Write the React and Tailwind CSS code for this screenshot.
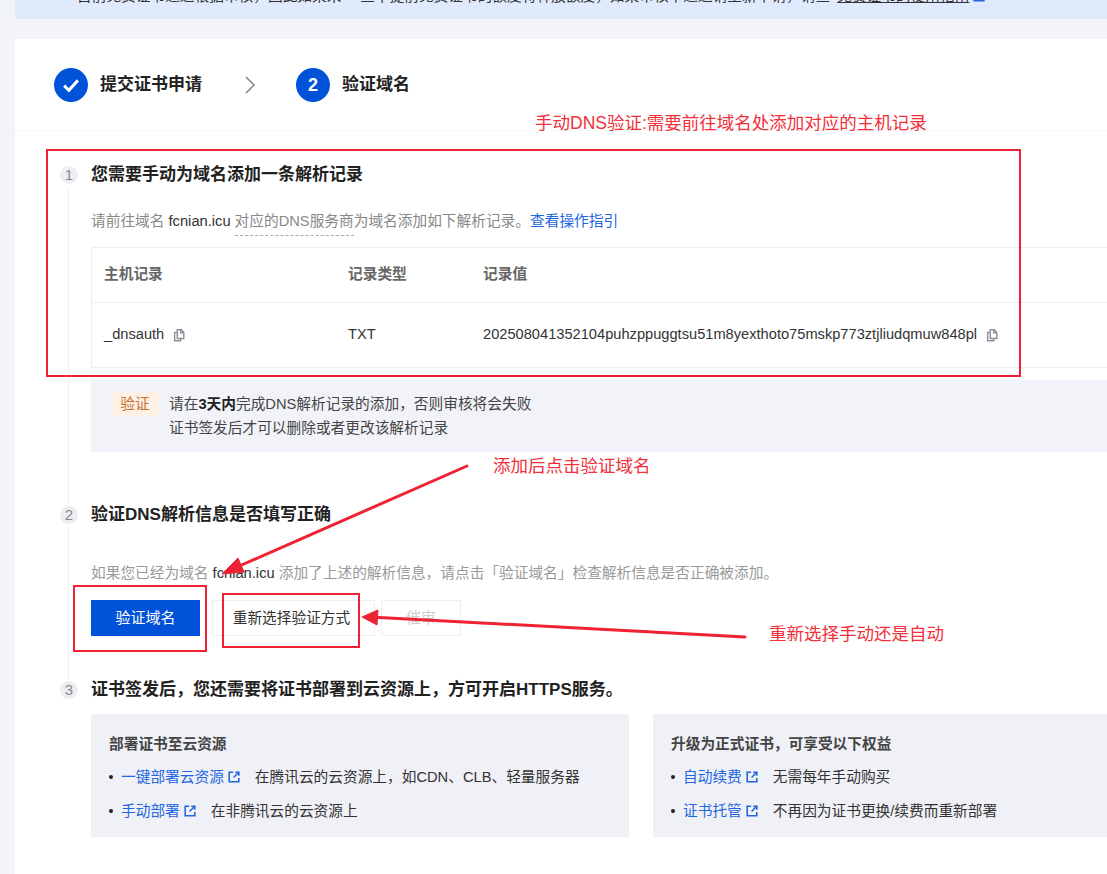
const font = { fontFamily: '"Liberation Sans", "Noto Sans CJK SC", sans-serif' };

function CopyIcon() {
  return (
    <svg viewBox="0 0 16 16" className="w-[14px] h-[14px] shrink-0 text-[#8a8f99]" fill="none" stroke="currentColor" strokeWidth="1.6">
      <path d="M6 2h4.5L13.5 5v7H6z" />
      <path d="M10 2v3.5h3.5" />
      <path d="M6 5H3v9.5h7V12" />
    </svg>
  );
}

function LinkIcon() {
  return (
    <svg viewBox="0 0 16 16" className="w-[14px] h-[14px] shrink-0 text-[#1f66e0] ml-[3px]" fill="none" stroke="currentColor" strokeWidth="1.8">
      <path d="M7 2.5H2.5v11h11V9" />
      <path d="M9.5 2.5h4v4" />
      <path d="M13.5 2.5L7.5 8.5" />
    </svg>
  );
}

function StepNum({ n }) {
  return (
    <div className="w-[18px] h-[18px] rounded-full bg-[#eceef2] text-[#888] text-[15px] flex items-center justify-center shrink-0">
      {n}
    </div>
  );
}

function Bullet({ label, desc }) {
  return (
    <div className="flex items-center text-[14.7px] text-[#333] h-[20px]">
      <span className="w-[4px] h-[4px] rounded-full bg-[#222] mr-[8px]" />
      <span className="text-[#1f66e0]">{label}</span>
      <LinkIcon />
      <span className="ml-[14px]">{desc}</span>
    </div>
  );
}

export default function App() {
  return (
    <div style={font} className="relative w-[1107px] h-[874px] overflow-hidden bg-[#f3f4f8] pl-[15px]">
      <div className="h-[19px] bg-[#e0eafd] overflow-hidden pl-[62px] text-[14.7px] text-[#333] leading-[20px] whitespace-nowrap">
        <div className="-mt-[14px] flex items-center">
          <span>目前免费证书通过根据审核，因此如果未  一旦中提前免费证书的额度将释放额度，如果审核不通过请重新申请，请查</span>
          <span className="underline ml-[7px]">免费证书的使用指南</span>
          <LinkIcon />
        </div>
      </div>

      <div className="mt-[20px] h-[835px] bg-white">
        <div className="h-[92px] border-b border-[#f7f7f8] flex items-start pt-[29px] pl-[39px]">
          <div className="w-[34px] h-[34px] rounded-full bg-[#0052d9] flex items-center justify-center">
            <svg viewBox="0 0 16 16" className="w-[20px] h-[20px]" fill="none" stroke="white" strokeWidth="2.4">
              <path d="M2.5 8.5l3.8 3.8 7.2-8" />
            </svg>
          </div>
          <span className="ml-[12px] text-[17px] leading-[34px] font-bold text-[#222]">提交证书申请</span>
          <svg viewBox="0 0 12 20" className="w-[12px] h-[20px] ml-[42px] mt-[7px] text-[#888]" fill="none" stroke="currentColor" strokeWidth="1.6">
            <path d="M2 2l8 8-8 8" />
          </svg>
          <div className="ml-[40px] w-[34px] h-[34px] rounded-full bg-[#0052d9] text-white font-bold text-[18px] flex items-center justify-center">2</div>
          <span className="ml-[12px] text-[17px] leading-[34px] font-bold text-[#222]">验证域名</span>
        </div>

        <div className="pl-[45px] pt-[34px]">
          <div className="flex items-center gap-[13px] h-[20px]">
            <StepNum n="1" />
            <h2 className="text-[17px] font-bold text-[#222]">您需要手动为域名添加一条解析记录</h2>
          </div>

          <div className="ml-[8px] border-l border-[#f0f0f2] pl-[22px] pb-[53px] mt-[2px]">
            <div className="pt-[20px] h-[60px] text-[14.7px] text-[#888] leading-[28px] flex items-start">
              <span>请前往域名 <span className="text-[#333]">fcnian.icu</span></span>
              <span className="ml-[4px] border-b border-dashed border-[#aaa] h-[29px]">对应的DNS服务商</span>
              <span>为域名添加如下解析记录。</span>
              <span className="text-[#1f66e0]">查看操作指引</span>
            </div>
            <div className="border border-[#eeeff1] w-[1040px]">
              <div className="flex h-[55px] pb-[2px] items-center border-b border-[#eeeff1] text-[14.7px] font-bold text-[#666]">
                <span className="w-[256px] pl-[12px]">主机记录</span>
                <span className="w-[135px]">记录类型</span>
                <span>记录值</span>
              </div>
              <div className="flex h-[64px] items-center text-[14.65px] text-[#333]">
                <div className="w-[256px] pl-[12px] flex items-center gap-[8px]">_dnsauth <CopyIcon /></div>
                <span className="w-[135px]">TXT</span>
                <div className="flex items-center gap-[8px]">202508041352104puhzppuggtsu51m8yexthoto75mskp773ztjliudqmuw848pl <CopyIcon /></div>
              </div>
            </div>
            <div className="mt-[12px] h-[72px] w-[1040px] bg-[#f2f3f8] flex items-start pl-[20px] pt-[12px]">
              <span className="w-[48px] h-[24px] bg-[#fdf0e5] text-[#c9722e] text-[14.7px] flex items-center justify-center shrink-0">验证</span>
              <div className="ml-[10px] text-[14.7px] text-[#444] leading-[24px]">
                <div>请在<b className="text-[#222]">3天内</b>完成DNS解析记录的添加，否则审核将会失败</div>
                <div>证书签发后才可以删除或者更改该解析记录</div>
              </div>
            </div>
          </div>

          <div className="flex items-center gap-[13px] h-[20px]">
            <StepNum n="2" />
            <h2 className="text-[17px] font-bold text-[#222]">验证DNS解析信息是否填写正确</h2>
          </div>

          <div className="ml-[8px] border-l border-[#f0f0f2] pl-[22px] pb-[44px] mt-[2px]">
            <div className="pt-[32px] text-[14.7px] text-[#999] leading-[28px]">
              如果您已经为域名 <span className="text-[#333]">fcnian.icu</span> 添加了上述的解析信息，请点击「验证域名」检查解析信息是否正确被添加。
            </div>
            <div className="flex mt-[13px]">
              <div className="w-[109px] h-[36px] bg-[#0052d9] text-white text-[15px] flex items-center justify-center">验证域名</div>
              <div className="ml-[12px] w-[163px] h-[36px] border border-[#eeeff1] text-[14.7px] text-[#333] flex items-center justify-center">
                <span className="-ml-[4px]">重新选择验证方式</span>
              </div>
              <div className="ml-[6px] w-[80px] h-[36px] border border-[#eeeff1] text-[14.7px] text-[#ccc] flex items-center justify-center">催审</div>
            </div>
          </div>

          <div className="flex items-center gap-[13px] h-[20px]">
            <StepNum n="3" />
            <h2 className="text-[17px] font-bold text-[#222]">证书签发后，您还需要将证书部署到云资源上，方可开启HTTPS服务。</h2>
          </div>

          <div className="ml-[31px] mt-[14px] flex gap-[24px] w-[1040px]">
            <div className="w-[538px] h-[123px] bg-[#f0f1f6] pl-[18px] pt-[20px] shrink-0">
              <div className="text-[14.7px] font-bold text-[#444] leading-[20px]">部署证书至云资源</div>
              <div className="mt-[13px] flex flex-col gap-[14px]">
                <Bullet label="一键部署云资源" desc="在腾讯云的云资源上，如CDN、CLB、轻量服务器" />
                <Bullet label="手动部署" desc="在非腾讯云的云资源上" />
              </div>
            </div>
            <div className="flex-1 h-[123px] bg-[#f0f1f6] pl-[18px] pt-[20px]">
              <div className="text-[14.7px] font-bold text-[#444] leading-[20px]">升级为正式证书，可享受以下权益</div>
              <div className="mt-[13px] flex flex-col gap-[14px]">
                <Bullet label="自动续费" desc="无需每年手动购买" />
                <Bullet label="证书托管" desc="不再因为证书更换/续费而重新部署" />
              </div>
            </div>
          </div>
        </div>
      </div>

      {/* annotations drawn over the screenshot */}
      <div className="absolute left-[46px] top-[149px] w-[975px] h-[228px] border-2 border-[#ee2233]" />
      <div className="absolute left-[73px] top-[585px] w-[134px] h-[67px] border-2 border-[#ee2233]" />
      <div className="absolute left-[222px] top-[593px] w-[138px] h-[55px] border-2 border-[#ee2233]" />
      <div className="absolute left-[535px] top-[111px] text-[17.5px] leading-[24px] text-[#f0303a] whitespace-nowrap">手动DNS验证:需要前往域名处添加对应的主机记录</div>
      <div className="absolute left-[493px] top-[454px] text-[17.5px] leading-[24px] text-[#f0303a] whitespace-nowrap">添加后点击验证域名</div>
      <div className="absolute left-[769px] top-[622px] text-[17.5px] leading-[24px] text-[#f0303a] whitespace-nowrap">重新选择手动还是自动</div>
      <svg className="absolute left-0 top-0 pointer-events-none" width="1107" height="874" fill="none">
        <path d="M467 466L228 571" stroke="#ee2233" strokeWidth="3" strokeLinecap="round" />
        <path d="M222 574L238 558L244 572Z" fill="#ee2233" stroke="#ee2233" />
        <path d="M745 637L370 617" stroke="#ee2233" strokeWidth="3" strokeLinecap="round" />
        <path d="M362 617L378 610L377 625Z" fill="#ee2233" stroke="#ee2233" />
      </svg>
    </div>
  );
}
